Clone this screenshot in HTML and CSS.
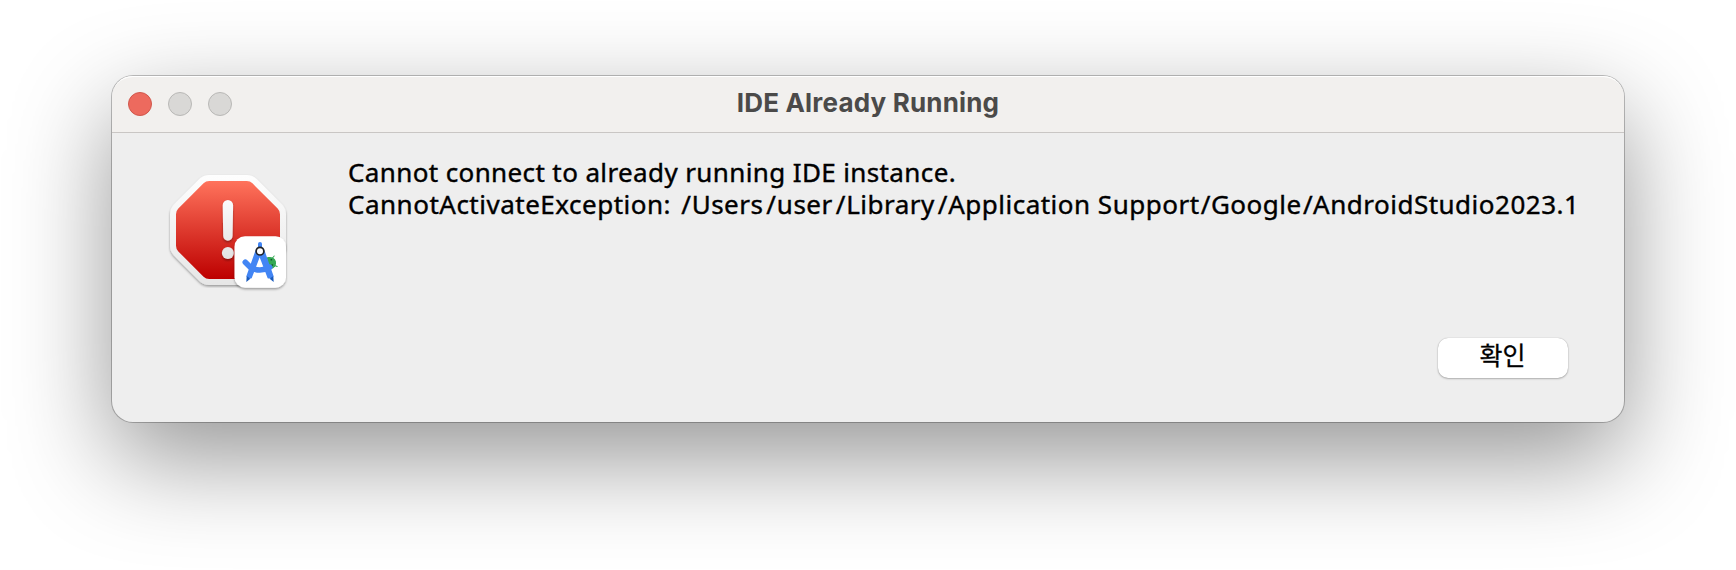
FILE: index.html
```html
<!DOCTYPE html>
<html lang="ko">
<head>
<meta charset="utf-8">
<title>IDE Already Running</title>
<link rel="stylesheet" href="styles.css">
</head>
<body>
<main class="dialog">
  <header class="titlebar">
    <div class="lights">
      <span class="light light-close"></span>
      <span class="light"></span>
      <span class="light"></span>
    </div>
    <h1 class="title"><span class="title-text">IDE Already Running</span></h1>
  </header>
  <section class="content">
    <svg class="alert-icon" width="140" height="135" viewBox="0 0 140 135">
      <defs>
        <linearGradient id="rim" gradientUnits="userSpaceOnUse" x1="0" y1="10" x2="0" y2="120">
          <stop offset="0" stop-color="#fefefe"/><stop offset="1" stop-color="#e6e6e6"/>
        </linearGradient>
        <linearGradient id="red" gradientUnits="userSpaceOnUse" x1="0" y1="16" x2="0" y2="114">
          <stop offset="0" stop-color="#ff735c"/><stop offset="1" stop-color="#bd0000"/>
        </linearGradient>
        <linearGradient id="mark" gradientUnits="userSpaceOnUse" x1="0" y1="35" x2="0" y2="94">
          <stop offset="0" stop-color="#fbfbfb"/><stop offset="1" stop-color="#e2e2e2"/>
        </linearGradient>
        <filter id="shadow" x="-20%" y="-20%" width="140%" height="140%">
          <feDropShadow dx="0" dy="1.5" stdDeviation="1.1" flood-color="#000" flood-opacity=".36"/>
        </filter>
      </defs>
      <path class="rim" filter="url(#shadow)" d="M49.200 24H86.800L112 49.200V80.800L86.800 106H49.200L24 80.800V49.200Z"/>
      <path class="octagon" d="M49.200 24H86.800L112 49.200V80.800L86.800 106H49.200L24 80.800V49.200Z"/>
      <g class="mark" filter="url(#shadow)">
        <path d="M62.700 40.200a5.200 5.200 0 0 1 10.400 0L72.600 71a4.700 4.700 0 0 1-9.400 0Z"/>
        <circle cx="67.900" cy="88" r="6"/>
      </g>
      <rect x="74.500" y="71.200" width="51.500" height="51.500" rx="10.500" fill="#fff" filter="url(#shadow)"/>
      <g transform="scale(.33333)">
        <g transform="rotate(-14 328 293)">
          <path d="M324 276h5a19 18.500 0 0 1 0 37h-5Z" fill="#34a853"/>
          <path d="M339 283l8-6M340 304l8 6" stroke="#34a853" stroke-width="3" stroke-linecap="round"/>
          <circle cx="336" cy="286" r="2.500" fill="#174b2a"/>
          <circle cx="335" cy="302" r="2.500" fill="#174b2a"/>
        </g>
        <path d="M300 237v14" stroke="#4285f4" stroke-width="12" stroke-linecap="round"/>
        <path d="M256 292L271 307Q300 323 329 307" fill="none" stroke="#4285f4" stroke-width="17" stroke-linecap="round" stroke-linejoin="round"/>
        <path d="M287 255L259 334Q265 343 275 340L299 277L323 340Q334 343 341 334L313 255Z" fill="#4285f4"/>
        <path d="M260 333l-1 18 12-10zM340 333l1 18-12-10z" fill="#185abc"/>
        <circle cx="300" cy="258.500" r="11.500" fill="#fff" stroke="#202124" stroke-width="5"/>
      </g>
    </svg>
    <p class="message"><span class="line line-first">Cannot connect to already running IDE instance.</span><span class="line line-second">CannotActivateException: <span class="slash">/</span>Users<span class="slash">/</span>user<span class="slash">/</span>Library<span class="slash">/</span>Application Support<span class="slash slash-tight">/</span>Google<span class="slash slash-tight">/</span>AndroidStudio2023.1</span></p>
    <button class="ok" type="button">확인</button>
  </section>
</main>
</body>
</html>
```
FILE: styles.css
```css
* { box-sizing: border-box; }
body {
  margin: 0;
  width: 1736px;
  height: 570px;
  padding: 76px 112px;
  overflow: hidden;
  background: #fff;
}
.dialog {
  width: 1512px;
  height: 346px;
  border-radius: 21px;
  background: #eee;
  box-shadow: 0 0 0 1px rgba(0, 0, 0, .24), 0 36px 100px rgba(0, 0, 0, .42);
}
.titlebar {
  display: grid;
  grid-template-columns: 16px 1fr 16px;
  align-items: center;
  height: 57px;
  border-radius: 21px 21px 0 0;
  border-bottom: 1px solid #c9c6c4;
  background: #f2f0ee;
  box-shadow: inset 0 2px 0 -1px #fff;
}
.lights {
  display: flex;
  gap: 16px;
  grid-area: 1 / 2;
}
.light {
  width: 24px;
  height: 24px;
  border-radius: 50%;
  border: 1px solid #b9b8b6;
  background: #d9d8d6;
}
.light-close {
  border-color: #d1574c;
  background: #ed6a5e;
}
.title {
  grid-area: 1 / 2;
  justify-self: center;
  margin: 0;
  padding-bottom: 3px;
  font: 700 26px/32px Inter, sans-serif;
  letter-spacing: .18px;
  color: #4b4a49;
  white-space: nowrap;
}
.content {
  display: grid;
  grid-template-columns: 188px 1fr 130px;
  grid-template-rows: 172px 40px;
  height: 289px;
  padding: 23px 56px 0 48px;
}
.alert-icon {
  grid-area: 1 / 1;
  margin-top: 9px;
}
.rim {
  fill: url(#rim);
  stroke: url(#rim);
  stroke-width: 28px;
  stroke-linejoin: round;
}
.octagon {
  fill: url(#red);
  stroke: url(#red);
  stroke-width: 16px;
  stroke-linejoin: round;
}
.mark { fill: url(#mark); }
.message {
  grid-area: 1 / 2 / 2 / 4;
  margin: 0;
  font: 400 26px/32px "Noto Sans", sans-serif;
  color: #000;
  -webkit-text-stroke: .4px #000;
}
.line {
  display: block;
  width: max-content;
  white-space: nowrap;
}
.line-first { letter-spacing: .38px; }
.line-second { letter-spacing: .5px; }
.slash { margin: 0 .3px 0 2.9px; }
.slash-tight { margin: 0 0 0 1.2px; }
.ok {
  grid-area: 2 / 3;
  margin: 10px 0 -10px;
  height: 40px;
  border: 0;
  padding: 0 1px 8px 0;
  border-radius: 10px;
  background: #fff;
  box-shadow: 0 0 1px rgba(0, 0, 0, .3), 0 1px 2px rgba(0, 0, 0, .25);
  font: 400 25px/32px "Noto Sans CJK KR", sans-serif;
  -webkit-text-stroke: .3px #000;
  color: #000;
}
```
